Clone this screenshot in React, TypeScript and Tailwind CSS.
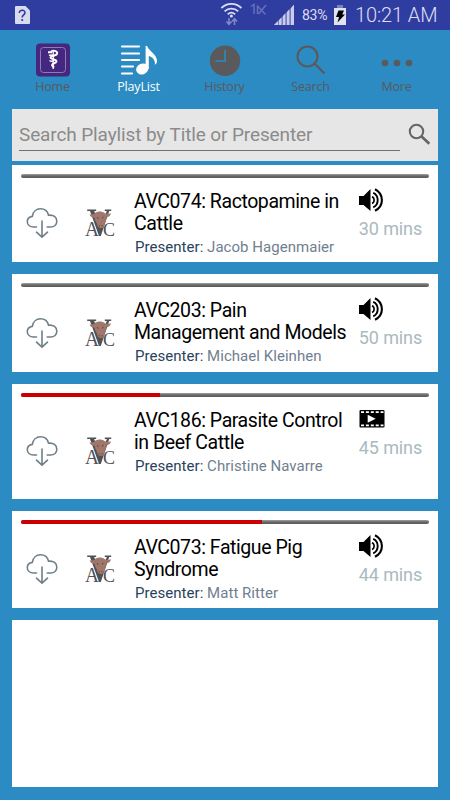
import type { ReactNode } from 'react';
import clsx from 'clsx';

type Talk = {
  code: string;
  title: [string, string];
  presenter: string;
  mins: number;
  media: 'audio' | 'video';
  progress: number;
  height: string;
};

const talks: Talk[] = [
  {
    code: 'AVC074',
    title: ['AVC074: Ractopamine in', 'Cattle'],
    presenter: 'Jacob Hagenmaier',
    mins: 30,
    media: 'audio',
    progress: 0,
    height: 'h-[97px]',
  },
  {
    code: 'AVC203',
    title: ['AVC203: Pain', 'Management and Models'],
    presenter: 'Michael Kleinhen',
    mins: 50,
    media: 'audio',
    progress: 0,
    height: 'h-[98px]',
  },
  {
    code: 'AVC186',
    title: ['AVC186: Parasite Control', 'in Beef Cattle'],
    presenter: 'Christine Navarre',
    mins: 45,
    media: 'video',
    progress: 34,
    height: 'h-[115px]',
  },
  {
    code: 'AVC073',
    title: ['AVC073: Fatigue Pig', 'Syndrome'],
    presenter: 'Matt Ritter',
    mins: 44,
    media: 'audio',
    progress: 59,
    height: 'h-[97px]',
  },
];

function StatusBar() {
  return (
    <div className="flex h-[30px] items-center bg-[#303da0] pl-[14px] text-[#dcdff3]">
      <svg width="16" height="20" viewBox="0 0 16 20">
        <path d="M2 1h9.5L16 5.5V18a1 1 0 0 1-1 1H2a1 1 0 0 1-1-1V2a1 1 0 0 1 1-1z" fill="#d8daf0" />
        <path d="M5.3 8c0-3.8 6.2-3.4 5.6 0-.3 1.9-2.7 2.2-2.7 4.6" fill="none" stroke="#303da0" strokeWidth="1.6" />
        <circle cx="8.2" cy="15" r="1.1" fill="#303da0" />
      </svg>
      <svg className="ml-[190px]" width="24" height="26" viewBox="220 2 24 26">
        <g fill="none" stroke="#dcdff3" strokeWidth="1.8">
          <path d="M221.4 8c5.6-5.4 14.4-5.4 20 0" />
          <path d="M224.6 11.3c3.9-3.6 9.7-3.6 13.6 0" />
          <path d="M227.7 14.3c2.2-2 5.2-2 7.4 0" />
        </g>
        <circle cx="231.4" cy="16" r="1.5" fill="#dcdff3" />
        <g fill="none" stroke="#8088c8" strokeWidth="1.6">
          <path d="M229 18v6M226.5 21.5l2.5 2.7 2.5-2.7M234.5 25v-6M232 21.5l2.5-2.7 2.5 2.7" />
        </g>
      </svg>
      <svg className="ml-[6px]" width="18" height="26" viewBox="250 2 18 26">
        <path
          d="M251 6.500l3-2V14M257.500 14V5.500M257 5.500l8.500 9M258.500 14l7.500-9"
          fill="none"
          stroke="#666fba"
          strokeWidth="1.5"
        />
      </svg>
      <svg className="ml-[5px]" width="22" height="26" viewBox="273 2 22 26">
        <g fill="#c9cdea">
          <path d="M274 25l4-4v4zM279 20l2.5-2.6V25H279zM283 16l2.3-2.4V25H283zM287 12l2.3-2.5V25H287zM291 8l3-3.2V25h-3z" />
          <path d="M274 25L294 4.800V25z" opacity=".45" />
        </g>
      </svg>
      <span className="ml-[7px] w-[28px] font-[Roboto] text-[14px] tracking-[-0.3px] whitespace-nowrap">83%</span>
      <svg className="ml-[3px]" width="14" height="24" viewBox="332 2 14 24">
        <path d="M336 4h6v3h-6z" fill="#7b82c3" />
        <path d="M333 7h12v17h-12z" fill="#e1e3f3" />
        <path d="M337.5 9.5h5.5l-1.8 4h2.8l-7.5 8 1.5-5.5h-3z" fill="#000" />
      </svg>
      <span className="ml-[8px] font-[Roboto] text-[20px] font-light tracking-[-0.1px] whitespace-nowrap">10:21 AM</span>
    </div>
  );
}

function NavItem({ label, active, children }: { label: string; active?: boolean; children: ReactNode }) {
  return (
    <div
      className={clsx(
        'flex w-[86px] flex-col items-center',
        active ? 'text-white' : 'text-[#5a5a5c]'
      )}
    >
      <div className="flex h-[36px] items-center justify-center">{children}</div>
      <span className="font-['Open_Sans'] text-[12.5px] leading-[17px] tracking-[-0.2px]">{label}</span>
    </div>
  );
}

function Nav() {
  return (
    <nav className="flex h-[79px] pt-[12px] pl-[9.5px]">
      <NavItem label="Home">
        <svg width="34" height="34" viewBox="0 0 34 34">
          <rect width="34" height="33" rx="4" y=".5" fill="#45277f" />
          <rect x="4.5" y="4.5" width="25" height="25" rx="3" fill="none" stroke="#8d7bb5" />
          <path d="M17.2 7v19" stroke="#fff" strokeWidth="1.3" />
          <path
            d="M12 9.200h4M15 8.500c3-2 7 0 6 2.500-1 2-6 1.200-6.500 3.500 0 2 6 1.500 6 4 0 2-4.500 1.500-4.500 3.500 0 1 1.500 1.500 2 2.500"
            fill="none"
            stroke="#fff"
            strokeWidth="1.9"
          />
          <path d="M13 12.500c2-.8 4-.5 5 1.500M13.500 17.500c1.500 1.200 3 1 4.500 0" fill="none" stroke="#fff" strokeWidth="1.5" />
        </svg>
      </NavItem>
      <NavItem label="PlayList" active>
        <svg width="38" height="32" viewBox="120 44 38 32">
          <path
            d="M122 46.5h17M122 53.5h17M122 60h17M122 66.5h11M122 73.5h10"
            stroke="#fff"
            strokeWidth="2.2"
            strokeLinecap="round"
          />
          <ellipse cx="142.3" cy="69" rx="6.3" ry="5.3" transform="rotate(-22 142.3 69)" fill="#fff" />
          <path d="M145.6 46h1.5c1.5 5 10.3 8.500 9.900 15.500-.1 1.500-1 2.700-2.200 3.300.8-4-2-8-6-8.800V69h-3.200z" fill="#fff" />
        </svg>
      </NavItem>
      <NavItem label="History">
        <svg width="32" height="32" viewBox="0 0 32 32">
          <circle cx="16" cy="16.7" r="15.2" fill="#5a5a5c" />
          <path d="M16 6v11H6.500" fill="none" stroke="#2b8bc2" strokeWidth="1.6" />
        </svg>
      </NavItem>
      <NavItem label="Search">
        <svg width="30" height="30" viewBox="0 0 30 30">
          <circle cx="11.5" cy="11.5" r="10" fill="none" stroke="#5a5a5c" strokeWidth="2.1" />
          <path d="M18.5 18.5l10 10" stroke="#5a5a5c" strokeWidth="2.3" />
        </svg>
      </NavItem>
      <NavItem label="More">
        <svg width="32" height="10" viewBox="0 0 32 10" className="mt-[6px]">
          <g fill="#5a5a5c">
            <circle cx="4" cy="5" r="3.3" />
            <circle cx="16" cy="5" r="3.3" />
            <circle cx="28" cy="5" r="3.3" />
          </g>
        </svg>
      </NavItem>
    </nav>
  );
}

function SearchBox() {
  return (
    <div className="mx-3 flex h-[52px] bg-[#e6e6e6] pl-[7px]">
      <div className="mt-[13px] h-[29px] w-[381px] border-b border-[#707070] font-[Roboto] text-[19px] leading-[26px] tracking-[-0.12px] whitespace-nowrap text-[#8b8b8b]">
        Search Playlist by Title or Presenter
      </div>
      <svg className="mt-[14px] ml-[8px]" width="24" height="24" viewBox="0 0 24 24">
        <circle cx="8.5" cy="8.5" r="6.7" fill="none" stroke="#666" strokeWidth="2.1" />
        <path d="M13.3 13.3l8 7.5" stroke="#666" strokeWidth="2.7" />
      </svg>
    </div>
  );
}

function CloudIcon() {
  return (
    <svg width="32" height="32" viewBox="0 0 32 32" fill="none" stroke="#6f7f89" strokeWidth="1.6">
      <path d="M10.5 20H7.500C3.800 20 1.300 17.700 1.300 14.800c0-3 2-5 5-5.400C7 4.500 10.500 1.800 14.500 1.800c4.200 0 7.200 2.700 8 6.400 5-.6 8.300 2 8.300 6 0 3.500-2.500 5.800-6.300 5.800h-3.300" strokeLinecap="round" />
      <path d="M16 14v16M10.5 25.200l5.500 5 5.500-5" strokeLinecap="round" />
    </svg>
  );
}

function AvcLogo() {
  return (
    <svg className="overflow-visible" width="32" height="32" viewBox="84 207 32 32" fontFamily="Liberation Serif" fill="#515156">
      <path d="M87.2 209.500h9v1.500h-2l6.300 16.500 6.300-16.500h-2v-1.500h6.400v1.500h-2L100.800 236h-1.800L90 211h-2.800z" />
      <text x="85" y="235.800" fontSize="20" textLength="14" lengthAdjust="spacingAndGlyphs">A</text>
      <text x="103" y="235.800" fontSize="19.500" textLength="12" lengthAdjust="spacingAndGlyphs">C</text>
      <path
        d="M89.5 214.500c2.500.4 4.300-.3 5.500-1.500 2.500-2 7-2 9.500 0 1.800 1.200 4 1 6.500.3-.5 2.500-2.500 4-5 4.200.2 3-.8 5-1.500 6.800-.3 2.900-2 4-4 3.700-2.500-.2-3.500-2-3.500-4.200-1-2-2.300-3.500-2.300-6-2.200 0-4.400-1.100-5.200-3.300z"
        fill="#9f776b"
      />
      <path d="M97 217.500l1.500.8M103.500 217.300l-1.500.8M98.800 225.500l1 .5M102.500 225.500l-1 .5" stroke="#5a3c36" strokeWidth="1" />
    </svg>
  );
}

function AudioIcon() {
  return (
    <svg width="26" height="24" viewBox="0 0 26 24">
      <path d="M1 8h4.500L12.500 1v22L5.500 17H1z" fill="#000" />
      <g fill="none" stroke="#000">
        <path d="M14 8.700c2.800 1 2.800 5.800 0 6.800" strokeWidth="1.6" />
        <path d="M15.2 4.800c6 2.600 6 12 0 14.600" strokeWidth="1.9" />
        <path d="M17 1.200c9.200 4.800 9.200 16.800 0 21.600" strokeWidth="2.1" />
      </g>
    </svg>
  );
}

function VideoIcon() {
  return (
    <svg className="overflow-visible" width="26" height="24" viewBox="0 0 26 24">
      <rect x="1.500" y="3" width="25" height="17.5" rx="1" fill="#000" />
      <path d="M3 5.200h22.500M3 18.300h22.500" stroke="#fff" strokeWidth="1.8" strokeDasharray="3 1.900" />
      <path d="M9.700 7.700l8 4-8 4z" fill="#fff" />
    </svg>
  );
}

function TalkCard({ talk }: { talk: Talk }) {
  return (
    <article className={clsx('mx-3 flex flex-col bg-white px-[9px] pt-[9px] font-[Roboto]', talk.height)}>
      <div className="h-1 w-[408px] shrink-0 overflow-hidden rounded-full bg-linear-to-b from-[#a2a2a0] via-[#676965] to-[#5b5c5a]">
        <div className="h-full bg-[#cc0000]" style={{ width: `${talk.progress}%` }} />
      </div>
      <div className="flex flex-1">
        <div className="mt-[6px] ml-[5px] w-[32px] self-center">
          <CloudIcon />
        </div>
        <div className="mt-[6px] ml-[26px] w-[32px] self-center">
          <AvcLogo />
        </div>
        <div className="ml-[18px] w-[226px] pt-[13px] whitespace-nowrap">
          <h2 className="text-[19.5px] leading-[22px] tracking-[-0.43px] text-black">
            {talk.title[0]}
            <br />
            {talk.title[1]}
          </h2>
          <p className="mt-[3px] ml-px text-[15px] leading-[18px] tracking-[0.04px] text-[#708090]">
            <span className="text-[#28425c]">Presenter:</span> {talk.presenter}
          </p>
        </div>
        <div className="w-[72px] pt-[10px]">
          {talk.media === 'audio' ? <AudioIcon /> : <VideoIcon />}
          <div className="mt-[6px] ml-px text-[18px] leading-[22px] tracking-[-0.1px] whitespace-nowrap text-[#abb9be]">
            {talk.mins} mins
          </div>
        </div>
      </div>
    </article>
  );
}

export default function App() {
  return (
    <div className="flex h-[800px] w-[450px] flex-col overflow-hidden bg-[#2b8bc2]">
      <StatusBar />
      <Nav />
      <SearchBox />
      <main className="mt-1 flex flex-1 flex-col gap-3">
        {talks.map((talk) => (
          <TalkCard key={talk.code} talk={talk} />
        ))}
        <div className="mx-3 h-[167px] bg-white" />
      </main>
    </div>
  );
}
